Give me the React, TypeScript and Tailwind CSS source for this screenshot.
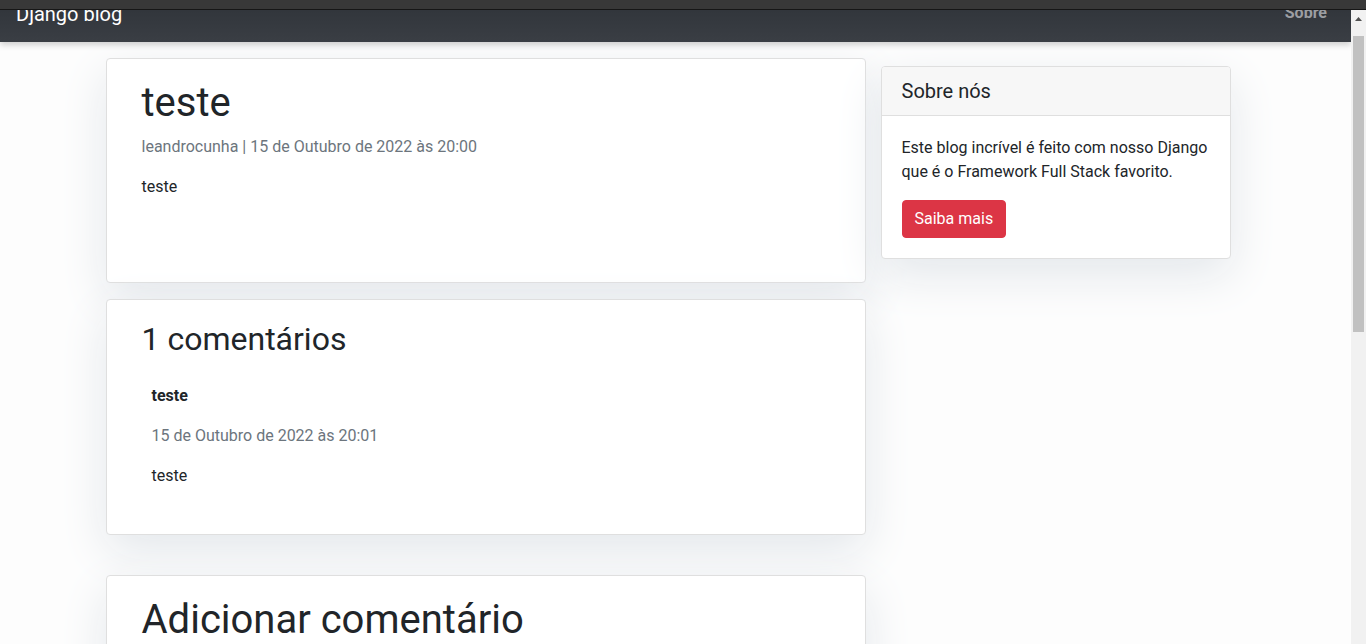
import React from 'react';

const font = { fontFamily: 'Roboto, "Liberation Sans", sans-serif' };

function Card({ className, children }: { className: string; children: React.ReactNode }) {
  return (
    <div className={`bg-white border border-[#dfdfdf] rounded-[4px] shadow-[0_16px_48px_#E3E7EB] ${className}`}>
      {children}
    </div>
  );
}

export default function App() {
  return (
    <div className="w-[1366px] h-[644px] overflow-hidden bg-white text-[#212529]" style={font}>
      {/* window strip */}
      <div className="h-[10px] bg-[#383838] border-b border-[#161616]" />

      <div className="flex h-[634px]">
        <div className="flex-1 overflow-hidden bg-[#fdfdfd]">
          <div className="-mt-[24px]">
            {/* Navbar */}
            <nav className="relative z-10 h-[56px] px-4 flex items-center justify-between bg-gradient-to-b from-[#2c3036] to-[#3a3e44] shadow-[0_3px_6px_rgba(0,0,0,0.18)]">
              <a className="text-white text-[20px] leading-[30px] py-[5px]">Django blog</a>
              <a className="text-[#9c9ea2] font-bold text-[16px] leading-[24px] px-2 -mt-[2px]">Sobre</a>
            </nav>

            {/* Content */}
            <div className="w-[1140px] mx-auto flex items-start">
              <div className="w-[760px] flex flex-col">
                <Card className="mt-4 h-[225px] px-[35px] pt-[20px]">
                  <h1 className="text-[40px] leading-[48px] mb-2">teste</h1>
                  <p className="text-[#6c757d] text-[16px] leading-[24px] mb-4">leandrocunha | 15 de Outubro de 2022 às 20:00</p>
                  <p className="text-[16px] leading-[24px]">teste</p>
                </Card>

                <Card className="mt-[16px] h-[236px] px-[35px] pt-[20px]">
                  <h2 className="text-[32px] leading-[38px] mb-[26px]">1 comentários</h2>
                  <div className="px-[10px]">
                    <p className="font-bold text-[16px] leading-[24px] mb-4">teste</p>
                    <p className="text-[#6c757d] text-[16px] leading-[24px] mb-4">15 de Outubro de 2022 às 20:01</p>
                    <p className="text-[16px] leading-[24px]">teste</p>
                  </div>
                </Card>

                <Card className="mt-[40px] h-[200px] px-[35px] pt-[20px]">
                  <h1 className="text-[40px] leading-[48px]">Adicionar comentário</h1>
                </Card>
              </div>

              {/* Sidebar */}
              <div className="w-[380px] px-[15px] mt-[24px]">
                <Card className="overflow-hidden">
                  <div className="bg-[#f7f7f7] border-b border-[#dfdfdf] px-5 py-3">
                    <h5 className="text-[20px] leading-[24px]">Sobre nós</h5>
                  </div>
                  <div className="p-5">
                    <p className="text-[16px] leading-[24px] mb-4">
                      Este blog incrível é feito com nosso Django que é o Framework Full Stack favorito.
                    </p>
                    <button className="bg-[#dc3545] text-white text-[16px] leading-[24px] px-3 py-[6px] border border-[#dc3545] rounded-[4px]">
                      Saiba mais
                    </button>
                  </div>
                </Card>
              </div>
            </div>
          </div>
        </div>

        {/* Scrollbar */}
        <div className="w-[15px] bg-[#f1f1f1] flex flex-col items-center">
          <div className="h-[17px] flex items-center justify-center">
            <svg width="7" height="4" viewBox="0 0 7 4">
              <path d="M0 4 L3.5 0 L7 4 Z" fill="#505050" />
            </svg>
          </div>
          <div className="w-[11px] h-[296px] mt-[9px] bg-[#c1c1c1]" />
        </div>
      </div>
    </div>
  );
}
